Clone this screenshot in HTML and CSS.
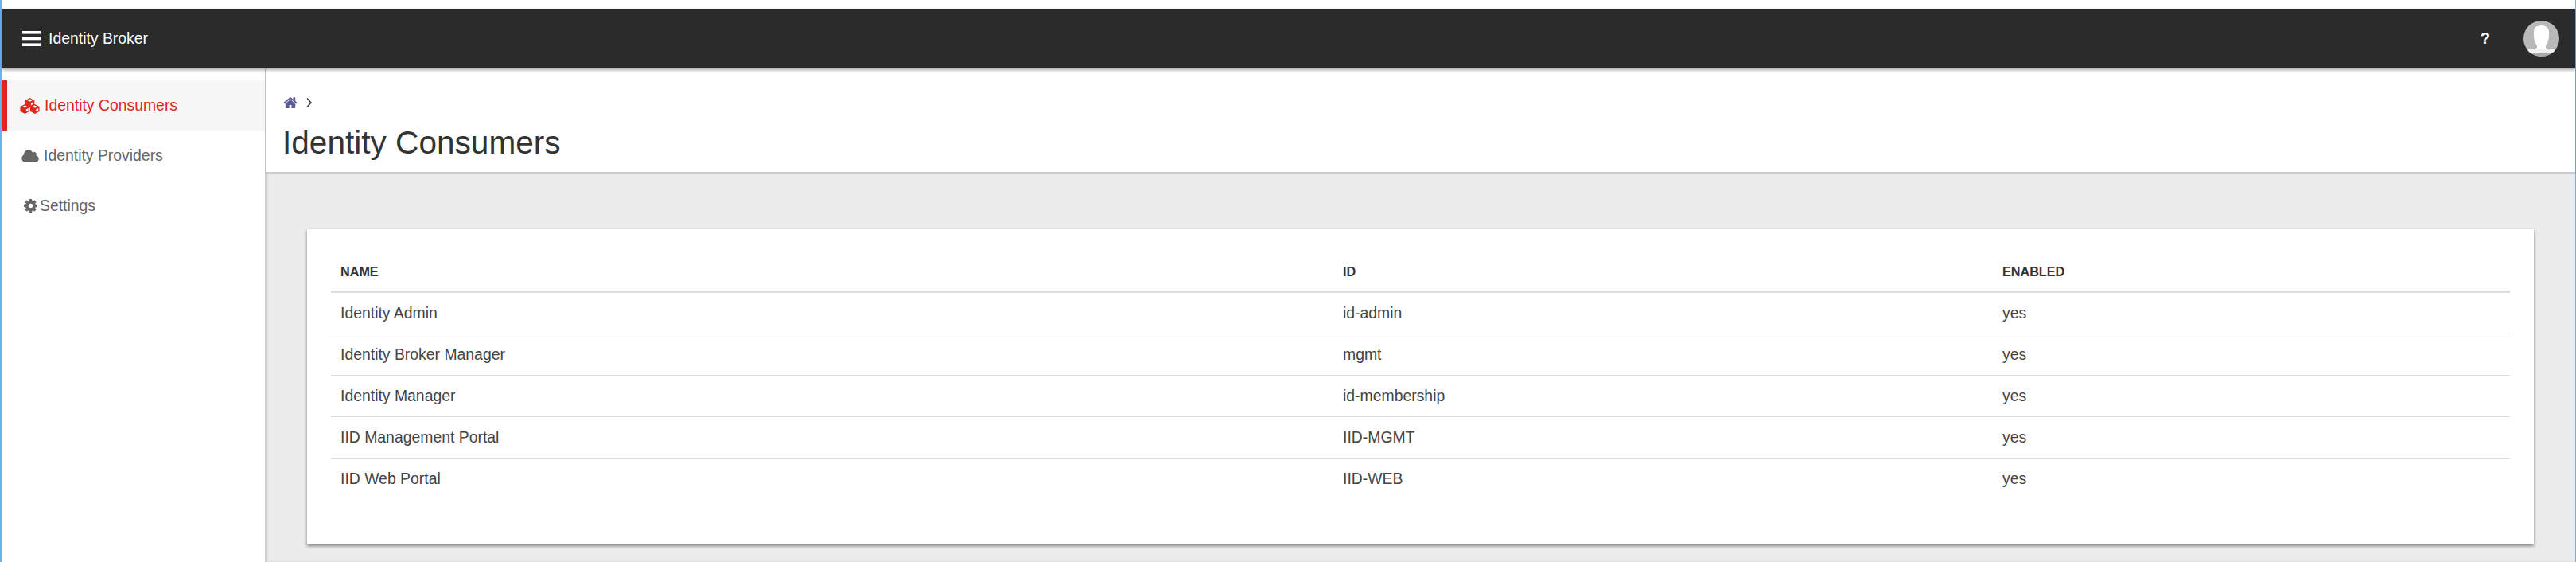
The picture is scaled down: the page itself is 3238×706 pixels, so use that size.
FILE: index.html
```html
<!DOCTYPE html>
<html lang="en">
<head>
    <meta charset="UTF-8">
    <meta name="viewport" content="width=device-width, initial-scale=1.0">
    <title>Identity Broker</title>
    <link rel="stylesheet" href="styles.css">
</head>
<body>
<div class="frame">
    <header class="topbar">
        <div class="brand">
            <svg class="bars" viewBox="0 0 23 19"><rect width="23" height="3.6" y="0"/><rect width="23" height="3.6" y="7.700"/><rect width="23" height="3.6" y="15.400"/></svg>
            <span class="brand_text">Identity Broker</span>
        </div>
        <div class="top_right">
            <span class="help">?</span>
            <svg class="avatar" viewBox="0 0 45 45">
                <defs><clipPath id="round"><circle cx="22.5" cy="22.5" r="22.5"/></clipPath></defs>
                <g clip-path="url(#round)">
                    <rect width="45" height="45" fill="#b9b9b9"/>
                    <path d="M4 40c1-2 9-3 13-6v-3c-2-2-4-7-4-13 0-3-.5-5 1-8 1.500-3 5-4 8.500-4s7 1 8.500 4c1.500 3 1 5 1 8 0 6-2 11-4 13v3c4 3 12 4 13 6z" fill="#fff"/>
                    <rect x="4" y="36" width="37" height="4" fill="#f0f0f0"/>
                    <rect y="40" width="45" height="5" fill="#a9a9a9"/>
                </g>
            </svg>
        </div>
    </header>
    <div class="main">
        <nav class="sidebar">
            <a class="nav_item active">
                <svg class="ic ic_cubes" viewBox="0 0 1920 1216" preserveAspectRatio="none">
                    <g transform="translate(512 0)"><path d="M448 0l448 192v352l-448 192-448-192V192z"/><path class="cube_hole" d="M448 90l240 102-240 102-240-102z"/><path class="cube_hole" d="M560 400l230-95v170l-230 100z"/></g>
                    <g transform="translate(32 480)"><path d="M448 0l448 192v352l-448 192-448-192V192z"/><path class="cube_hole" d="M448 90l240 102-240 102-240-102z"/><path class="cube_hole" d="M560 400l230-95v170l-230 100z"/></g>
                    <g transform="translate(992 480)"><path d="M448 0l448 192v352l-448 192-448-192V192z"/><path class="cube_hole" d="M448 90l240 102-240 102-240-102z"/><path class="cube_hole" d="M560 400l230-95v170l-230 100z"/></g>
                </svg>
                <span>Identity Consumers</span>
            </a>
            <a class="nav_item">
                <svg class="ic ic_cloud" viewBox="0 0 1920 1792"><path d="M1920 1216q0 159-112.500 271.500t-271.500 112.500h-1088q-185 0-316.500-131.500t-131.500-316.500q0-132 71-241.500t187-163.500q-2-28-2-43 0-212 150-362t362-150q158 0 286.500 88t187.500 230q70-62 166-62 106 0 181 75t75 181q0 75-41 138 129 30 213 134.500t84 239.500z"/></svg>
                <span>Identity Providers</span>
            </a>
            <a class="nav_item">
                <svg class="ic ic_cog" viewBox="128 128 1536 1536"><path d="M1152 896q0-106-75-181t-181-75-181 75-75 181 75 181 181 75 181-75 75-181zm512-109v222q0 12-8 23t-20 13l-185 28q-19 54-39 91 35 50 107 138 10 12 10 25t-9 23q-27 37-99 108t-94 71q-12 0-26-9l-138-108q-44 23-91 38-16 136-29 186-7 28-36 28h-222q-14 0-24.500-8.500t-11.500-21.500l-28-184q-49-16-90-37l-141 107q-10 9-25 9-14 0-25-11-126-114-165-168-7-10-7-23 0-12 8-23 15-21 51-66.500t54-70.500q-27-50-41-99l-183-27q-13-2-21-12.500t-8-23.500v-222q0-12 8-23t19-13l186-28q14-46 39-92-40-57-107-138-10-12-10-24 0-10 9-23 26-36 98.500-107.500t94.500-71.500q13 0 26 10l138 107q44-23 91-38 16-136 29-186 7-28 36-28h222q14 0 24.500 8.500t11.500 21.500l28 184q49 16 90 37l142-107q9-9 24-9 13 0 25 10 129 119 165 170 7 8 7 22 0 12-8 23-15 21-51 66.500t-54 70.500q26 50 41 98l183 28q13 2 21 12.500t8 23.500z"/></svg>
                <span>Settings</span>
            </a>
        </nav>
        <section class="content">
            <div class="page_head">
                <div class="crumbs">
                    <svg class="ic_home" viewBox="64 224 1664 1312" preserveAspectRatio="none"><path d="M1472 992v480q0 26-19 45t-45 19h-384v-384h-256v384h-384q-26 0-45-19t-19-45v-480q0-1 .5-3t.5-3l575-474 575 474q1 2 1 6zm223-69l-62 74q-8 9-21 11h-3q-13 0-21-7l-692-577-692 577q-12 8-24 7-13-2-21-11l-62-74q-8-10-7-23.500t11-21.500l719-599q32-26 76-26t76 26l244 204v-195q0-14 9-23t23-9h192q14 0 23 9t9 23v408l219 182q10 8 11 21.500t-7 23.500z"/></svg>
                    <svg class="chevron" viewBox="0 0 7 12"><path d="M1 .5l5 5.500-5 5.500" fill="none" stroke="#333" stroke-width="1.400"/></svg>
                </div>
                <h1 class="page_title">Identity Consumers</h1>
            </div>
            <div class="page_body">
                <div class="card">
                    <table class="list">
                        <colgroup><col class="col_name"><col class="col_id"><col></colgroup>
                        <thead>
                            <tr><th>NAME</th><th>ID</th><th>ENABLED</th></tr>
                        </thead>
                        <tbody>
                            <tr><td>Identity Admin</td><td>id-admin</td><td>yes</td></tr>
                            <tr><td>Identity Broker Manager</td><td>mgmt</td><td>yes</td></tr>
                            <tr><td>Identity Manager</td><td>id-membership</td><td>yes</td></tr>
                            <tr><td>IID Management Portal</td><td>IID-MGMT</td><td>yes</td></tr>
                            <tr><td>IID Web Portal</td><td>IID-WEB</td><td>yes</td></tr>
                        </tbody>
                    </table>
                </div>
            </div>
        </section>
    </div>
</div>
</body>
</html>
```
FILE: styles.css
```css
html, body {
    margin: 0;
    height: 100%;
    overflow: hidden;
}
body {
    background: #fff;
    color: #333;
    font-family: "Liberation Sans", Arial, sans-serif;
}
.frame {
    display: flex;
    flex-direction: column;
    height: 706px;
    padding-top: 11px;
    box-sizing: border-box;
    border-left: 2px solid #6cb0f2;
    border-right: 1px solid #6cb0f2;
}

/* top bar */
.topbar {
    position: relative;
    z-index: 2;
    display: flex;
    align-items: center;
    justify-content: space-between;
    flex: none;
    height: 75px;
    margin-left: 1px;
    background: #2b2b2b;
    box-shadow: 0 2px 4px rgba(0,0,0,.35);
}
.brand {
    display: flex;
    align-items: center;
    gap: 10px;
    padding-left: 25px;
}
.bars {
    width: 23px;
    height: 19px;
    fill: #fff;
}
.brand_text {
    color: #fff;
    font-size: 19.4px;
}
.top_right {
    display: flex;
    align-items: center;
    gap: 42px;
    padding-right: 20px;
}
.help {
    color: #fff;
    font-size: 20px;
    font-weight: bold;
}
.avatar {
    width: 45px;
    height: 45px;
}

/* sidebar */
.main {
    display: flex;
    flex: 1;
    min-height: 0;
}
.sidebar {
    flex: none;
    width: 330px;
    margin-left: 1px;
    padding-top: 15px;
    border-right: 1px solid #ccc;
    background: #fff;
}
.nav_item {
    display: flex;
    align-items: center;
    gap: 6px;
    height: 63px;
    padding-left: 18px;
    border-left: 6px solid transparent;
    color: #666;
    font-size: 19.4px;
}
.nav_item.active {
    padding-left: 16px;
    border-left-color: #e2251b;
    background: #f7f7f7;
    color: #e2251b;
}
.ic {
    flex: none;
    fill: currentColor;
}
.ic_cubes {
    width: 25px;
    height: 20px;
}
.cube_hole {
    fill: #f7f7f7;
}
.ic_cloud {
    width: 22px;
    height: 20px;
}
.ic_cog {
    width: 17px;
    height: 17px;
    margin-left: 3px;
    margin-right: -3px;
}

/* content */
.content {
    display: flex;
    flex-direction: column;
    flex: 1;
    min-width: 0;
}
.page_head {
    flex: none;
    height: 131px;
    box-sizing: border-box;
    padding: 35px 0 0 21px;
    border-bottom: 1px solid #ccc;
    box-shadow: 0 1px 2px rgba(0,0,0,.15);
    position: relative;
}
.crumbs {
    display: flex;
    align-items: center;
    gap: 11px;
    height: 16px;
    padding-left: 1px;
}
.ic_home {
    width: 18px;
    height: 14px;
    fill: #5a5c92;
}
.chevron {
    width: 7px;
    height: 12px;
}
.page_title {
    margin: 18px 0 0;
    font-size: 40.6px;
    font-weight: normal;
    line-height: 48px;
    color: #333;
}
.page_body {
    flex: 1;
    padding: 71px 52px 0;
    background: #ececec;
    box-shadow: inset 2px 0 3px rgba(0,0,0,.12);
}
.card {
    height: 396px;
    box-sizing: border-box;
    padding: 29px 30px 0;
    background: #fff;
    box-shadow: 0 2px 4px rgba(0,0,0,.45);
}

/* table */
.list {
    width: 100%;
    border-collapse: separate;
    border-spacing: 0;
    table-layout: fixed;
}
.col_name {
    width: 1260px;
}
.col_id {
    width: 829px;
}
.list th {
    height: 48px;
    padding: 0 12px;
    border-bottom: 3px solid #ddd;
    font-size: 16.2px;
    text-align: left;
    color: #333;
}
.list td {
    height: 51px;
    padding: 0 12px;
    border-bottom: 1px solid #ddd;
    font-size: 19.4px;
    color: #444;
}
.list tr:last-child td {
    border-bottom: none;
}
```
